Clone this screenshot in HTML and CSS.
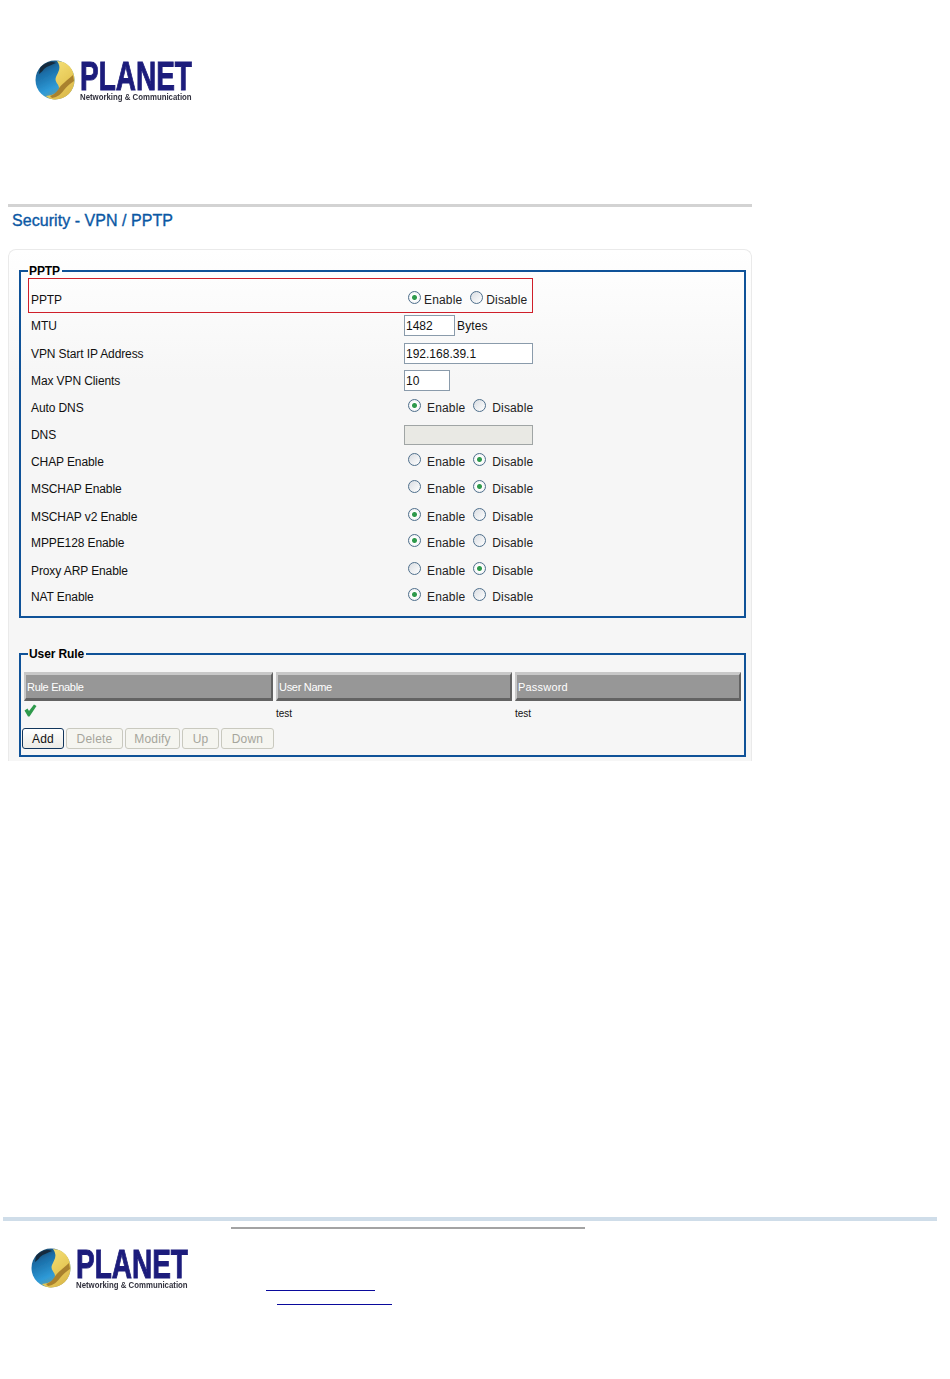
FILE: index.html
```html
<!DOCTYPE html>
<html lang="en">
<head>
<meta charset="utf-8">
<title>Security - VPN / PPTP</title>
<link rel="stylesheet" href="styles.css">
</head>
<body>
<svg class="defs" width="0" height="0" aria-hidden="true">
  <defs>
    <linearGradient id="sea" x1="0" y1="0" x2="0.5" y2="1">
      <stop offset="0" stop-color="#1a3347"/>
      <stop offset="0.35" stop-color="#1a6ea8"/>
      <stop offset="0.75" stop-color="#2f9bd8"/>
      <stop offset="1" stop-color="#6f9a90"/>
    </linearGradient>
    <linearGradient id="sun" x1="0.2" y1="0" x2="0.8" y2="1">
      <stop offset="0" stop-color="#f6e27a"/>
      <stop offset="0.55" stop-color="#e8cb5a"/>
      <stop offset="1" stop-color="#d9b64a"/>
    </linearGradient>
    <filter id="soft" x="-5%" y="-15%" width="110%" height="130%"><feGaussianBlur stdDeviation="0.6"/></filter>
    <g id="globe" filter="url(#soft)">
      <circle cx="20" cy="20" r="19.500" fill="url(#sea)"/>
      <path d="M22 1C33 1 39.500 10 39.500 20C39.500 31 31 39.500 20 39.500C15 39.500 12 37 11 36C20 35 24 32 24 28C24 24 19 22 21 17C23 12 27 8 22 1Z" fill="url(#sun)"/>
      <path d="M38 15C33 20 26 24 23 30C21 33 18 35 15 36L17 38C23 37 26 34 29 30C32 26 36 23 39 21Z" fill="#a9812f"/>
      <path d="M5 8C10 2 17 1 21 3C17 5 12 6 9 9C7 12 5 13 4 14Z" fill="#15293c"/>
    </g>
  </defs>
</svg>

<header class="top">
  <svg class="logo" width="210" height="46" viewBox="0 0 210 46" role="img" aria-label="Planet logo">
    <use href="#globe" x="0" y="3"/>
    <text class="logo-word" transform="translate(45 33) scale(0.7 1)" filter="url(#soft)">PLANET</text>
    <text class="logo-tag" transform="translate(45 43) scale(0.87 1)" filter="url(#soft)">Networking &amp; Communication</text>
  </svg>
</header>

<main class="content">
  <h1 class="title">Security - VPN / PPTP</h1>
  <section class="panel">
    <fieldset class="box box-pptp">
      <legend>PPTP</legend>
      <div class="rows">
        <div class="row row-mark">
          <span class="label">PPTP</span>
          <span class="value"><input class="radio" type="radio" name="pptp" checked><span class="opt">Enable</span><input class="radio" type="radio" name="pptp"><span class="opt">Disable</span></span>
        </div>
        <div class="row"><span class="label">MTU</span><span class="value"><input class="field w51" type="text" value="1482"><span class="unit">Bytes</span></span></div>
        <div class="row"><span class="label">VPN Start IP Address</span><span class="value"><input class="field w129" type="text" value="192.168.39.1"></span></div>
        <div class="row"><span class="label">Max VPN Clients</span><span class="value"><input class="field w46" type="text" value="10"></span></div>
        <div class="row"><span class="label">Auto DNS</span><span class="value"><input class="radio" type="radio" name="dns" checked><span class="opt">Enable</span><input class="radio" type="radio" name="dns"><span class="opt">Disable</span></span></div>
        <div class="row"><span class="label">DNS</span><span class="value"><input class="field w129 off" type="text" disabled></span></div>
        <div class="row"><span class="label">CHAP Enable</span><span class="value"><input class="radio" type="radio" name="chap"><span class="opt">Enable</span><input class="radio" type="radio" name="chap" checked><span class="opt">Disable</span></span></div>
        <div class="row"><span class="label">MSCHAP Enable</span><span class="value"><input class="radio" type="radio" name="ms"><span class="opt">Enable</span><input class="radio" type="radio" name="ms" checked><span class="opt">Disable</span></span></div>
        <div class="row"><span class="label">MSCHAP v2 Enable</span><span class="value"><input class="radio" type="radio" name="ms2" checked><span class="opt">Enable</span><input class="radio" type="radio" name="ms2"><span class="opt">Disable</span></span></div>
        <div class="row"><span class="label">MPPE128 Enable</span><span class="value"><input class="radio" type="radio" name="mppe" checked><span class="opt">Enable</span><input class="radio" type="radio" name="mppe"><span class="opt">Disable</span></span></div>
        <div class="row"><span class="label">Proxy ARP Enable</span><span class="value"><input class="radio" type="radio" name="arp"><span class="opt">Enable</span><input class="radio" type="radio" name="arp" checked><span class="opt">Disable</span></span></div>
        <div class="row"><span class="label">NAT Enable</span><span class="value"><input class="radio" type="radio" name="nat" checked><span class="opt">Enable</span><input class="radio" type="radio" name="nat"><span class="opt">Disable</span></span></div>
      </div>
    </fieldset>

    <fieldset class="box box-user">
      <legend>User Rule</legend>
      <div class="table">
        <div class="th">Rule Enable</div>
        <div class="th">User Name</div>
        <div class="th th-wide">Password</div>
        <div class="td"><svg class="check" width="13" height="13" viewBox="0 0 13 13" aria-label="enabled"><path d="M0.500 6.500L3.500 4.500L5 7L10 0.500L12.500 2L5.500 12.500L4 12.500Z" fill="#2f9a4c"/></svg></div>
        <div class="td td-text">test</div>
        <div class="td td-text">test</div>
      </div>
      <div class="buttons">
        <button class="btn btn-main w42" type="button">Add</button>
        <button class="btn w57" type="button" disabled>Delete</button>
        <button class="btn w55" type="button" disabled>Modify</button>
        <button class="btn w37" type="button" disabled>Up</button>
        <button class="btn w53" type="button" disabled>Down</button>
      </div>
    </fieldset>
  </section>
</main>

<footer class="foot">
  <div class="foot-line"></div>
  <div class="foot-body">
    <svg class="logo" width="210" height="46" viewBox="0 0 210 46" role="img" aria-label="Planet logo">
      <use href="#globe" x="0" y="3"/>
      <text class="logo-word" transform="translate(45 33) scale(0.7 1)" filter="url(#soft)">PLANET</text>
      <text class="logo-tag" transform="translate(45 43) scale(0.87 1)" filter="url(#soft)">Networking &amp; Communication</text>
    </svg>
    <div class="foot-side">
      <div class="foot-rule"></div>
      <a class="link link-a" href="#" aria-label="website"></a>
      <a class="link link-b" href="#" aria-label="email"></a>
    </div>
  </div>
</footer>
</body>
</html>
```

FILE: styles.css
```css
* { box-sizing: border-box; }
html, body { margin: 0; padding: 0; background: #fff; }
body {
  height: 1379px;
  overflow: hidden;
  font-family: "Liberation Sans", Arial, sans-serif;
  font-size: 12px;
  color: #111;
}
.defs { display: block; height: 0; }

.top { height: 204px; padding: 57px 0 0 35px; }
.logo { display: block; }
.logo-word { font: 700 40px "Liberation Sans", Arial, sans-serif; fill: #1e1e7c; stroke: #1e1e7c; stroke-width: 1px; }
.logo-tag { font: 700 9px "Liberation Sans", Arial, sans-serif; fill: #33333f; }

.content { width: 744px; margin-left: 8px; border-top: 3px solid #d3d3d3; }
.title {
  margin: 0;
  height: 42px;
  padding: 3px 0 0 4px;
  font-size: 16px;
  line-height: 22px;
  font-weight: 400;
  letter-spacing: 0.05px;
  color: #0b58a4;
  -webkit-text-stroke: 0.35px #0b58a4;
}

.panel {
  height: 512px;
  padding: 21px 5px 0 10px;
  border: 1px solid #eaeaea;
  border-bottom: 0;
  border-radius: 8px 8px 0 0;
  background: linear-gradient(#fff 0, #f6f6f6 130px);
}

.box {
  margin: 0;
  padding: 0;
  min-width: 0;
  border: 2px solid #0f5298;
}
.box legend {
  margin-left: 7px;
  padding: 0 2px 0 1px;
  font-size: 12px;
  line-height: 14px;
  font-weight: 700;
  letter-spacing: -0.1px;
  color: #000;
}
.box-pptp { height: 354px; margin-top: -7px; }
.box-user { height: 110px; margin-top: 29px; }

.rows {
  display: grid;
  padding: 0 0 0 7px;
  width: 512px;
  grid-template-rows: 37px 28px 27px 27px 27px 27px 27px 28px 26px 28px 26px 26px;
}
.row {
  display: grid;
  grid-template-columns: 373px 1fr;
  align-items: start;
  padding-left: 3px;
  line-height: 20px;
}
.row-mark {
  height: 35px;
  border: 1px solid #cf1f2a;
  padding: 10px 0 0 2px;
}
.row-mark .opt { margin: 0 4px 0 3px; }
.value { display: flex; align-items: center; height: 20px; letter-spacing: 0.15px; }
.label { display: block; padding-top: 1px; white-space: nowrap; letter-spacing: -0.1px; }

.radio {
  appearance: none;
  -webkit-appearance: none;
  flex: none;
  width: 13px;
  height: 13px;
  margin: -3px 0 0 4px;
  border: 1px solid #4f6f8c;
  border-radius: 50%;
  background: linear-gradient(135deg, #d9dde2, #fff);
}
.radio:checked {
  background: radial-gradient(circle, #2f9a4c 0 2px, #fff 3px, #e4e8ea 100%);
}
.opt { margin: 0 4px 0 6px; padding-top: 2px; color: #222; }
.opt:last-child, .row-mark .opt:last-child { margin-right: 0; }

.field {
  align-self: flex-start;
  height: 21px;
  padding: 0 1px;
  border: 1px solid #8a9bab;
  background: #fff;
  font: 12px "Liberation Sans", Arial, sans-serif;
  color: #111;
  border-radius: 0;
  outline: 0;
}
.off { height: 20px; margin-top: 1px; background: #e9e9e4; border-color: #a0a5a5; }
.w51 { width: 51px; }
.w129 { width: 129px; }
.w46 { width: 46px; }
.unit { margin-left: 2px; padding-top: 2px; }

.table {
  display: grid;
  grid-template-columns: 249px 236px 226px;
  column-gap: 3px;
  padding: 11px 0 0 3px;
  width: 720px;
}
.th {
  height: 29px;
  padding-left: 1px;
  border-top: 3px solid #c8c8c8;
  border-left: 2px solid #c8c8c8;
  border-right: 2px solid #636363;
  border-bottom: 3px solid #636363;
  background: #979797;
  color: #fff;
  font-size: 11px;
  line-height: 25px;
  letter-spacing: -0.3px;
}
.th-wide { letter-spacing: 0.2px; }
.td { height: 27px; }
.td-text { font-size: 10px; line-height: 26px; color: #111; }
.check { display: block; margin: 3px 0 0 0; }

.buttons { display: flex; gap: 2px; padding-left: 1px; }
.btn {
  height: 21px;
  padding: 0;
  border: 1px solid #c9c9bf;
  border-radius: 3px;
  background: #f5f5f0;
  font: 12px "Liberation Sans", Arial, sans-serif;
  letter-spacing: 0.2px;
  color: #a5a59c;
}
.btn-main {
  border-color: #12365c;
  color: #111;
  background: linear-gradient(#fff, #ecebe6);
}
.w42 { width: 42px; }
.w57 { width: 57px; }
.w55 { width: 55px; }
.w37 { width: 37px; }
.w53 { width: 53px; }

.foot { margin-top: 456px; padding-left: 3px; }
.foot-line { width: 934px; height: 4px; background: #cfdde9; }
.foot-body { display: flex; align-items: flex-start; }
.foot-body .logo { margin: 24px -48px 0 28px; }
.foot-side { margin-left: 38px; padding-top: 6px; }
.foot-rule { width: 354px; height: 2px; background: #a3a3a3; }
.link { display: block; height: 1px; background: #0a0a9c; }
.link-a { width: 109px; margin: 61px 0 0 35px; }
.link-b { width: 115px; margin: 13px 0 0 46px; }
```
